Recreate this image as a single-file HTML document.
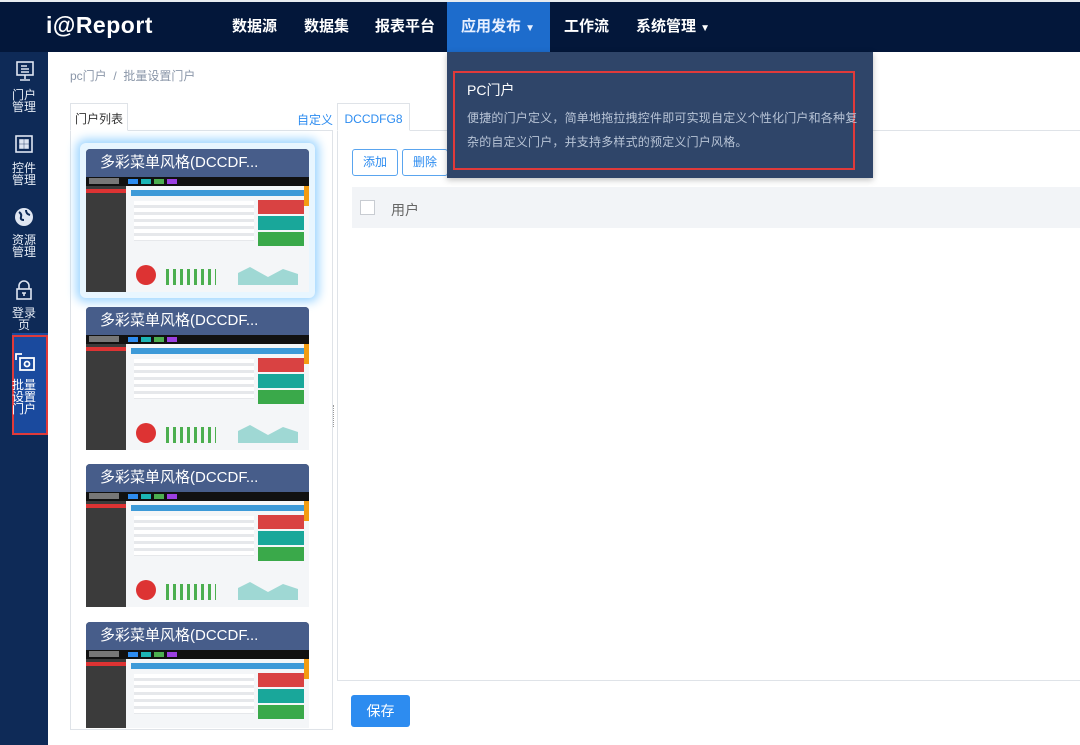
<!DOCTYPE html>
<html><head><meta charset="utf-8"><style>
*{margin:0;padding:0;box-sizing:border-box}
body{width:1080px;height:745px;overflow:hidden;background:#fff;font-family:"Liberation Sans","Noto Sans CJK SC",sans-serif;position:relative}
.abs{position:absolute}
.top{left:0;top:0;width:1080px;height:52px;background:#03173a;border-top:2px solid #e8ecf0}
.nav{top:2px;height:50px;line-height:50px;color:#fff;font-weight:bold;font-size:15px}
.side{left:0;top:52px;width:48px;height:693px;background:#0e2a57}
.si{left:0;width:48px;text-align:center;color:#e6ecf5;font-size:12px;line-height:12px}
.card{position:absolute;left:86px;width:223px;background:#3a3f47;border-radius:4px 4px 0 0;overflow:hidden}
.card .h{height:28px;background:#475d8a;color:#fff;font-size:15px;line-height:28px;padding-left:14px}
.card .img{position:relative;height:115px;background:#f4f6f8}
</style></head><body>
<div class="abs top"></div>
<div class="abs" style="left:46px;top:12px;color:#fff;font-size:23px;font-weight:bold;letter-spacing:0.5px">i@Report</div>
<div class="abs nav" style="left:232px">数据源</div>
<div class="abs nav" style="left:304px">数据集</div>
<div class="abs nav" style="left:375px">报表平台</div>
<div class="abs nav" style="left:447px;width:103px;background:#1d6ccc;padding-left:14px;color:#e8f0ff">应用发布 <span style="font-size:10px">▼</span></div>
<div class="abs nav" style="left:564px">工作流</div>
<div class="abs nav" style="left:636px">系统管理 <span style="font-size:10px">▼</span></div>

<div class="abs side"></div>
<div class="abs" style="left:12px;top:333px;width:36px;height:100px;background:#1a4a9e"></div>
<div class="abs" style="left:12px;top:335px;width:36px;height:100px;border:2px solid #e03a3a"></div>
<svg class="abs" style="left:15px;top:60px" width="20" height="22" viewBox="0 0 20 22" fill="none" stroke="#dfe6f2" stroke-width="1.6"><rect x="2" y="2" width="16" height="13"/><path d="M6 6h6M6 9h8M6 12h8M10 15v4M5 20h10"/></svg>
<div class="abs si" style="top:89px">门户<br>管理</div>
<svg class="abs" style="left:14px;top:134px" width="20" height="20" viewBox="0 0 20 20" fill="none" stroke="#dfe6f2" stroke-width="1.6"><rect x="2" y="2" width="16" height="16"/><rect x="6" y="6" width="3" height="3" fill="#dfe6f2"/><rect x="11" y="6" width="3" height="3" fill="#dfe6f2"/><rect x="6" y="11" width="3" height="3" fill="#dfe6f2"/><rect x="11" y="11" width="3" height="3" fill="#dfe6f2"/></svg>
<div class="abs si" style="top:162px">控件<br>管理</div>
<svg class="abs" style="left:14px;top:207px" width="20" height="20" viewBox="0 0 20 20"><circle cx="10" cy="10" r="9" fill="#dfe6f2"/><path d="M5 5q3 2 2 5t3 3M12 3q0 4 4 5" stroke="#0e2a57" stroke-width="2" fill="none"/></svg>
<div class="abs si" style="top:234px">资源<br>管理</div>
<svg class="abs" style="left:15px;top:280px" width="18" height="20" viewBox="0 0 18 20" fill="none" stroke="#dfe6f2" stroke-width="1.6"><path d="M4 9V6a5 5 0 0 1 10 0v3"/><rect x="2" y="9" width="14" height="10"/><path d="M7 13h4M9 13v3"/></svg>
<div class="abs si" style="top:307px">登录<br>页</div>
<svg class="abs" style="left:14px;top:352px" width="22" height="20" viewBox="0 0 22 20" fill="none" stroke="#fff" stroke-width="1.8"><path d="M2 8V2h6"/><rect x="6" y="6" width="14" height="12"/><circle cx="13" cy="12" r="2.5"/></svg>
<div class="abs si" style="top:379px;color:#fff">批量<br>设置<br>门户</div>

<div class="abs" style="left:70px;top:67px;font-size:12px;color:#8a96a8">pc门户 &nbsp;/&nbsp; 批量设置门户</div>

<div class="abs" style="left:70px;top:130px;width:263px;height:600px;border:1px solid #dfe3e8"></div>
<div class="abs" style="left:70px;top:103px;width:58px;height:28px;border:1px solid #dfe3e8;border-bottom:1px solid #fff;background:#fff;font-size:12px;line-height:30px;text-align:center;color:#333">门户列表</div>
<div class="abs" style="left:297px;top:111px;font-size:12px;color:#2d8cf0">自定义</div>
<div class="abs" style="left:80px;top:143px;width:235px;height:155px;border-radius:6px;box-shadow:0 0 10px 4px #9fd6ff;background:#e8f6ff"></div>

<div class="abs" style="left:337px;top:130px;width:750px;height:551px;border:1px solid #dfe3e8"></div>
<div class="abs" style="left:337px;top:103px;width:73px;height:28px;border:1px solid #dfe3e8;border-bottom:1px solid #fff;background:#fff;font-size:12px;line-height:30px;text-align:center;color:#2d8cf0">DCCDFG8</div>
<div class="abs" style="left:352px;top:149px;width:46px;height:27px;border:1px solid #5aa5ef;border-radius:3px;font-size:12px;line-height:25px;text-align:center;color:#2d8cf0">添加</div>
<div class="abs" style="left:402px;top:149px;width:46px;height:27px;border:1px solid #5aa5ef;border-radius:3px;font-size:12px;line-height:25px;text-align:center;color:#2d8cf0">删除</div>
<div class="abs" style="left:352px;top:187px;width:728px;height:41px;background:#f2f4f7"></div>
<div class="abs" style="left:360px;top:200px;width:15px;height:15px;border:1px solid #c8ccd2;background:#fff"></div>
<div class="abs" style="left:391px;top:200px;font-size:14px;color:#666">用户</div>
<div class="abs" style="left:333px;top:405px;width:3px;height:22px;border-left:1px dotted #999"></div>
<div class="abs" style="left:351px;top:695px;width:59px;height:32px;background:#2d8cf0;border-radius:3px;color:#fff;font-size:14px;line-height:32px;text-align:center">保存</div>

<div id="cards"></div>
<script>
var tpl='<div class="h">多彩菜单风格(DCCDF...</div><div class="img">'+
'<div class="abs" style="left:0;top:0;width:223px;height:9px;background:#111"></div>'+
'<div class="abs" style="left:3px;top:1px;width:30px;height:6px;background:#777"></div>'+
'<div class="abs" style="left:42px;top:2px;width:10px;height:5px;background:#2d8cf0"></div><div class="abs" style="left:55px;top:2px;width:10px;height:5px;background:#1bb5b5"></div><div class="abs" style="left:68px;top:2px;width:10px;height:5px;background:#4caf50"></div><div class="abs" style="left:81px;top:2px;width:10px;height:5px;background:#9b3fe0"></div>'+
'<div class="abs" style="left:0;top:9px;width:40px;height:106px;background:#3b3b3b"></div>'+
'<div class="abs" style="left:0;top:12px;width:40px;height:4px;background:#d33"></div>'+
'<div class="abs" style="left:45px;top:13px;width:178px;height:6px;background:#3d9ad8"></div>'+
'<div class="abs" style="left:48px;top:24px;width:120px;height:40px;background:repeating-linear-gradient(#fff 0 4px,#e6e8eb 4px 7px)"></div>'+
'<div class="abs" style="left:172px;top:23px;width:46px;height:14px;background:#d94242"></div>'+
'<div class="abs" style="left:172px;top:39px;width:46px;height:14px;background:#19a79a"></div>'+
'<div class="abs" style="left:172px;top:55px;width:46px;height:14px;background:#3aa94a"></div>'+
'<div class="abs" style="left:218px;top:9px;width:5px;height:20px;background:#f39c12"></div>'+
'<div class="abs" style="left:50px;top:88px;width:20px;height:20px;border-radius:50%;background:#d33"></div>'+
'<div class="abs" style="left:80px;top:92px;width:50px;height:16px;background:repeating-linear-gradient(90deg,#4caf50 0 3px,transparent 3px 7px)"></div>'+
'<div class="abs" style="left:152px;top:88px;width:60px;height:20px;background:#9fd8d4;clip-path:polygon(0 40%,20% 10%,50% 60%,75% 20%,100% 45%,100% 100%,0 100%)"></div>'+
'</div>';
var tops=[149,307,464,622],h='';
tops.forEach(function(t){h+='<div class="card" style="top:'+t+'px;height:'+(t==622?106:143)+'px">'+tpl+'</div>';});
document.getElementById('cards').innerHTML=h;
</script>

<div class="abs" style="left:447px;top:52px;width:426px;height:126px;background:#2f4569;box-shadow:0 2px 6px rgba(0,0,0,.25)"></div>
<div class="abs" style="left:453px;top:71px;width:402px;height:99px;border:2px solid #e03a3a"></div>
<div class="abs" style="left:467px;top:80px;font-size:14px;color:#fff">PC门户</div>
<div class="abs" style="left:467px;top:106px;width:392px;font-size:12px;letter-spacing:0.2px;line-height:24px;color:#b8c4d6">便捷的门户定义，简单地拖拉拽控件即可实现自定义个性化门户和各种复杂的自定义门户，并支持多样式的预定义门户风格。</div>
</body></html>
